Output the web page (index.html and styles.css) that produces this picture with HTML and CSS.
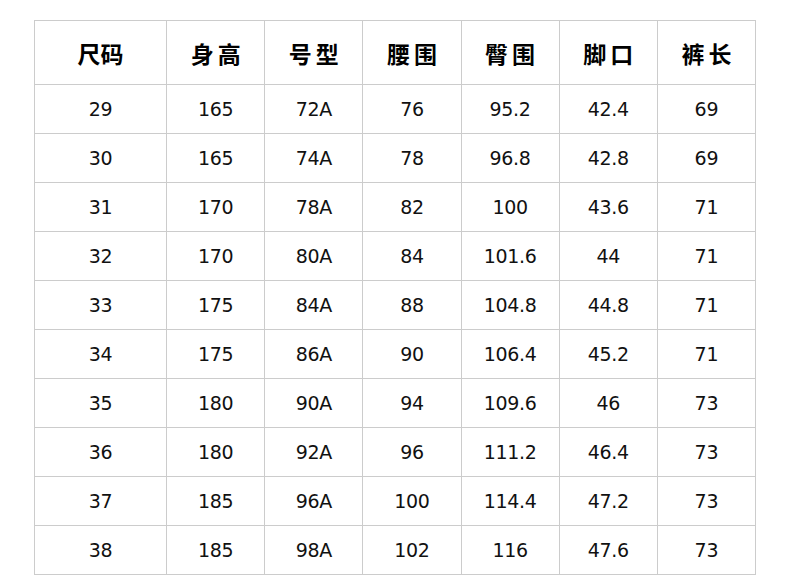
FILE: index.html
```html
<!DOCTYPE html>
<html lang="zh">
<head>
<meta charset="utf-8">
<link rel="stylesheet" href="styles.css">
</head>
<body>
<table class="size-table">
  <colgroup>
    <col class="c-first"><col class="c"><col class="c"><col class="c"><col class="c"><col class="c"><col class="c">
  </colgroup>
  <thead>
    <tr><th>尺码</th><th class="spaced">身高</th><th class="spaced">号型</th><th class="spaced">腰围</th><th class="spaced">臀围</th><th class="spaced">脚口</th><th class="spaced">裤长</th></tr>
  </thead>
  <tbody>
    <tr><td>29</td><td>165</td><td>72A</td><td>76</td><td>95.2</td><td>42.4</td><td>69</td></tr>
    <tr><td>30</td><td>165</td><td>74A</td><td>78</td><td>96.8</td><td>42.8</td><td>69</td></tr>
    <tr><td>31</td><td>170</td><td>78A</td><td>82</td><td>100</td><td>43.6</td><td>71</td></tr>
    <tr><td>32</td><td>170</td><td>80A</td><td>84</td><td>101.6</td><td>44</td><td>71</td></tr>
    <tr><td>33</td><td>175</td><td>84A</td><td>88</td><td>104.8</td><td>44.8</td><td>71</td></tr>
    <tr><td>34</td><td>175</td><td>86A</td><td>90</td><td>106.4</td><td>45.2</td><td>71</td></tr>
    <tr><td>35</td><td>180</td><td>90A</td><td>94</td><td>109.6</td><td>46</td><td>73</td></tr>
    <tr><td>36</td><td>180</td><td>92A</td><td>96</td><td>111.2</td><td>46.4</td><td>73</td></tr>
    <tr><td>37</td><td>185</td><td>96A</td><td>100</td><td>114.4</td><td>47.2</td><td>73</td></tr>
    <tr><td>38</td><td>185</td><td>98A</td><td>102</td><td>116</td><td>47.6</td><td>73</td></tr>
  </tbody>
</table>
</body>
</html>
```

FILE: styles.css
```css
html, body {
  margin: 0;
  padding: 0;
  background: #fff;
}
body {
  padding: 20px 0 0 34px;
}
.size-table {
  border-collapse: collapse;
  table-layout: fixed;
  width: 722px;
  font-family: "DejaVu Sans", "Noto Sans CJK SC", sans-serif;
  color: #111;
}
.c-first { width: 132px; }
.c { width: 98px; }
.size-table th,
.size-table td {
  border: 1px solid #cccccc;
  text-align: center;
  padding: 0;
}
.size-table th {
  height: 63px;
  font-family: "Noto Sans CJK SC", sans-serif;
  font-size: 23px;
  font-weight: 700;
  color: #000;
}
.size-table th.spaced {
  letter-spacing: 4px;
  text-indent: 4px;
}
.size-table td {
  height: 48px;
  font-size: 19px;
  font-weight: 400;
  letter-spacing: -0.3px;
}
```
